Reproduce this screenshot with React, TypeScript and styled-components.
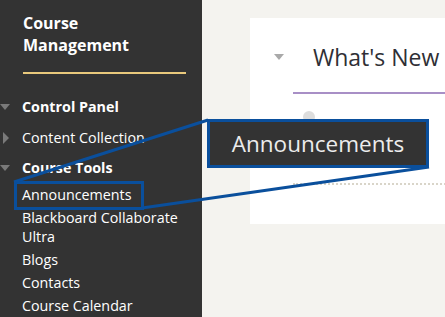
import React from "react";
import styled, { createGlobalStyle } from "styled-components";

const Global = createGlobalStyle`
  html, body { margin: 0; padding: 0; }
  body { font-family: "Open Sans", "Liberation Sans", sans-serif; background: #f4f3ef; overflow: hidden; }
`;

const Page = styled.div`
  position: relative;
  display: flex;
  width: 445px;
  height: 317px;
  overflow: hidden;
  background: #f4f3ef;
`;

const Sidebar = styled.nav`
  flex: 0 0 202px;
  height: 317px;
  background: #333333;
  color: #ffffff;
  display: flex;
  flex-direction: column;
`;

const Brand = styled.div`
  padding: 12px 0 0 23px;
  font-size: 16px;
  line-height: 22px;
  font-weight: 700;
`;

const GoldRule = styled.div`
  margin: 16px 0 0 23px;
  width: 163px;
  height: 2px;
  background: #e9c97c;
`;

const Section = styled.div<{ $top: number }>`
  margin-top: ${(p) => p.$top}px;
  display: flex;
  flex-direction: column;
`;

const Row = styled.div<{ $bold?: boolean; $after?: number }>`
  display: flex;
  align-items: flex-start;
  font-size: 14.3px;
  line-height: 19px;
  font-weight: ${(p) => (p.$bold ? 700 : 400)};
  padding: ${(p) => (p.$bold ? "0" : "2px 0")};
  margin-bottom: ${(p) => p.$after ?? 0}px;
`;

const IconSlot = styled.span`
  flex: 0 0 22px;
  height: 19px;
  display: flex;
  align-items: center;
`;

const TriDown = styled.span`
  width: 0;
  height: 0;
  border-left: 5.5px solid transparent;
  border-right: 5.5px solid transparent;
  border-top: 6px solid #7a7a7a;
`;

const TriRight = styled.span`
  margin-left: 3px;
  width: 0;
  height: 0;
  border-top: 6px solid transparent;
  border-bottom: 6px solid transparent;
  border-left: 6px solid #7a7a7a;
`;

const Label = styled.span`
  flex: 1;
  padding-right: 8px;
`;

const Main = styled.main`
  flex: 1;
  padding: 18px 0 0 48px;
  min-width: 0;
`;

const Card = styled.section`
  background: #ffffff;
  height: 206px;
  width: 260px;
  display: flex;
  flex-direction: column;
`;

const CardHeader = styled.div`
  display: flex;
  align-items: center;
  gap: 29px;
  padding: 24px 0 0 24px;
  height: 30px;
`;

const HeaderTri = styled.span`
  width: 0;
  height: 0;
  border-left: 5.5px solid transparent;
  border-right: 5.5px solid transparent;
  border-top: 6px solid #a9a9a9;
`;

const CardTitle = styled.h2`
  margin: 0;
  font-size: 23px;
  line-height: 30px;
  font-weight: 400;
  color: #2f2f35;
  white-space: nowrap;
`;

const Underline = styled.div`
  margin: 20px 0 0 43px;
  height: 2px;
  background: #a88fc6;
`;

const Dot = styled.div`
  margin: 17px 0 0 53px;
  width: 12px;
  height: 12px;
  border-radius: 50%;
  background: #dddddd;
`;

const Dotted = styled.div`
  margin: 60px 0 0 43px;
  border-top: 2px dotted #d9d5c9;
`;

const Overlay = styled.svg`
  position: absolute;
  left: 0;
  top: 0;
  pointer-events: none;
`;

const Callout = styled.div`
  position: absolute;
  left: 207px;
  top: 119px;
  width: 222px;
  height: 49px;
  box-sizing: border-box;
  border: 3px solid #0a4f9c;
  background: #333333;
  color: #ececec;
  font-size: 22.5px;
  line-height: 43px;
  text-align: center;
`;

const tools = ["Announcements", "Blackboard Collaborate Ultra", "Blogs", "Contacts", "Course Calendar"];

export default function App() {
  return (
    <Page>
      <Global />
      <Sidebar>
        <Brand>
          Course
          <br />
          Management
        </Brand>
        <GoldRule />
        <Section $top={23}>
          <Row $bold $after={10}>
            <IconSlot>
              <TriDown />
            </IconSlot>
            <Label>Control Panel</Label>
          </Row>
          <Row>
            <IconSlot>
              <TriRight />
            </IconSlot>
            <Label>Content Collection</Label>
          </Row>
        </Section>
        <Section $top={9}>
          <Row $bold $after={6}>
            <IconSlot>
              <TriDown />
            </IconSlot>
            <Label>Course Tools</Label>
          </Row>
          {tools.map((t) => (
            <Row key={t}>
              <IconSlot />
              <Label>{t}</Label>
            </Row>
          ))}
        </Section>
      </Sidebar>
      <Main>
        <Card>
          <CardHeader>
            <HeaderTri />
            <CardTitle>What's New</CardTitle>
          </CardHeader>
          <Underline />
          <Dot />
          <Dotted />
        </Card>
      </Main>
      <Overlay width="445" height="317" viewBox="0 0 445 317">
        <rect x="15.5" y="182.5" width="127" height="26" fill="none" stroke="#0a4f9c" strokeWidth="3" />
        <line x1="14" y1="182" x2="208" y2="120" stroke="#0a4f9c" strokeWidth="3" />
        <line x1="142" y1="208" x2="429" y2="167" stroke="#0a4f9c" strokeWidth="3" />
      </Overlay>
      <Callout>Announcements</Callout>
    </Page>
  );
}
